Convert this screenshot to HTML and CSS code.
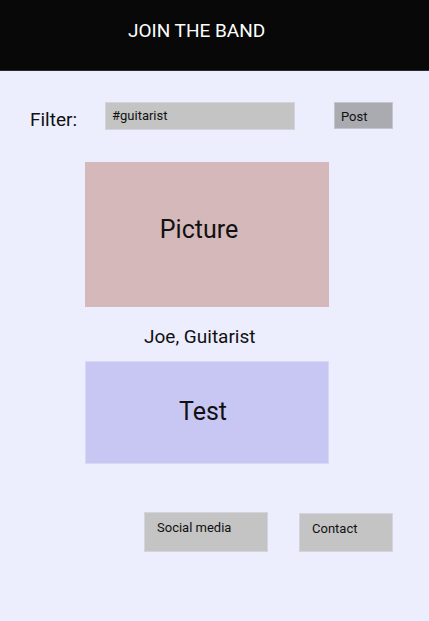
FILE: index.html
```html
<!DOCTYPE html>
<html>
<head>
<meta charset="utf-8">
<link rel="stylesheet" href="styles.css">
</head>
<body>
<header class="top">
  <h1 class="title">JOIN THE BAND</h1>
</header>
<main class="page">
  <div class="filter-row">
    <label class="filter-label">Filter:</label>
    <div class="filter-input">#guitarist</div>
    <div class="post-btn">Post</div>
  </div>
  <div class="picture">Picture</div>
  <div class="caption">Joe, Guitarist</div>
  <div class="test">Test</div>
  <div class="links">
    <div class="link social">Social media</div>
    <div class="link contact">Contact</div>
  </div>
</main>
</body>
</html>
```
FILE: styles.css
```css
html, body {
  margin: 0;
  padding: 0;
  height: 100%;
}
body {
  background: #eceefd;
  font-family: Roboto, "Liberation Sans", sans-serif;
  color: #111;
}
.top {
  background: #080808;
  height: 71px;
  border-bottom: 1px solid #2a2a33;
  box-sizing: border-box;
  padding-left: 128px;
  padding-top: 19px;
}
.title {
  margin: 0;
  font-size: 19px;
  font-weight: 400;
  color: #fff;
  line-height: 23px;
}
.page {
  display: flex;
  flex-direction: column;
}
.filter-row {
  display: flex;
  align-items: flex-start;
  margin-top: 31px;
  padding-left: 30px;
}
.filter-label {
  font-size: 19px;
  line-height: 22px;
  margin-top: 7px;
  width: 75px;
}
.filter-input {
  width: 190px;
  height: 28px;
  box-sizing: border-box;
  background: #c4c4c4;
  border: 1px solid #d3d4de;
  font-size: 13px;
  padding: 5px 0 0 6px;
}
.post-btn {
  margin-left: 39px;
  width: 59px;
  height: 27px;
  box-sizing: border-box;
  background: #aaabb1;
  border: 1px solid #c4c5cf;
  font-size: 13px;
  padding: 6px 0 0 6px;
}
.picture {
  margin: 31px 0 0 85px;
  width: 244px;
  height: 145px;
  box-sizing: border-box;
  padding: 0 16px 10px 0;
  background: #d5b8b9;
  display: flex;
  align-items: center;
  justify-content: center;
  font-size: 25px;
}
.caption {
  margin: 19px 0 0 144px;
  font-size: 19px;
  line-height: 22px;
  height: 35px;
}
.test {
  margin-left: 85px;
  width: 244px;
  height: 103px;
  box-sizing: border-box;
  padding: 0 8px 3px 0;
  background: #c8c6f2;
  border: 1px solid #d7d8f6;
  display: flex;
  align-items: center;
  justify-content: center;
  font-size: 25px;
}
.links {
  display: flex;
  margin-top: 48px;
  padding-left: 144px;
  gap: 31px;
}
.link {
  height: 40px;
  box-sizing: border-box;
  background: #c4c4c4;
  border: 1px solid #d3d4de;
  font-size: 13px;
  padding: 7px 0 0 12px;
}
.social {
  width: 124px;
}
.contact {
  width: 94px;
  margin-top: 1px;
  height: 39px;
}
```
